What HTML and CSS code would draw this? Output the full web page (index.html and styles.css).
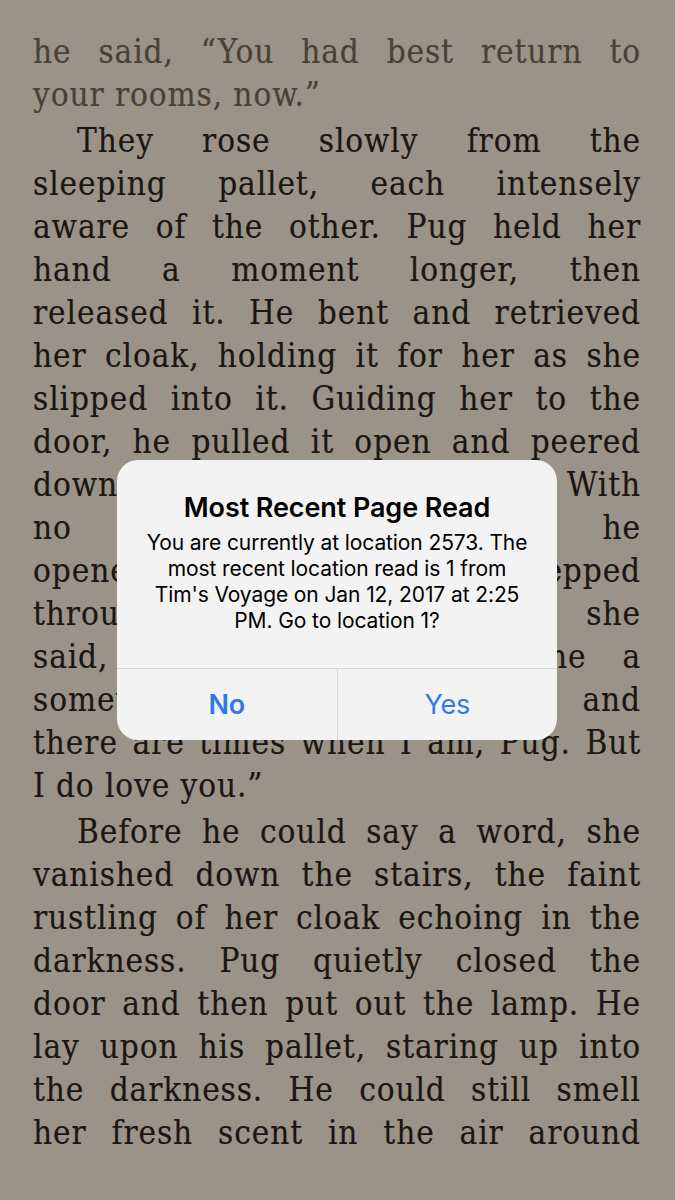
FILE: index.html
```html
<!DOCTYPE html>
<html>
<head>
<meta charset="utf-8">
<link rel="stylesheet" href="styles.css">
</head>
<body>
<div class="page">
  <div class="para faded">
    <div class="ln">he said, “You had best return to</div>
    <div class="ln last">your rooms, now.”</div>
  </div>
  <div class="para">
    <div class="ln indent">They rose slowly from the</div>
    <div class="ln">sleeping pallet, each intensely</div>
    <div class="ln">aware of the other. Pug held her</div>
    <div class="ln">hand a moment longer, then</div>
    <div class="ln">released it. He bent and retrieved</div>
    <div class="ln">her cloak, holding it for her as she</div>
    <div class="ln">slipped into it. Guiding her to the</div>
    <div class="ln">door, he pulled it open and peered</div>
    <div class="ln">down the stairs below. With</div>
    <div class="ln">no hint of anyone about, he</div>
    <div class="ln">opened the door and she stepped</div>
    <div class="ln">through. Turning, she</div>
    <div class="ln">said, “I know you think me a</div>
    <div class="ln">somewhat spoiled girl, and</div>
    <div class="ln">there are times when I am, Pug. But</div>
    <div class="ln last">I do love you.”</div>
  </div>
  <div class="para">
    <div class="ln indent">Before he could say a word, she</div>
    <div class="ln">vanished down the stairs, the faint</div>
    <div class="ln">rustling of her cloak echoing in the</div>
    <div class="ln">darkness. Pug quietly closed the</div>
    <div class="ln">door and then put out the lamp. He</div>
    <div class="ln">lay upon his pallet, staring up into</div>
    <div class="ln">the darkness. He could still smell</div>
    <div class="ln">her fresh scent in the air around</div>
  </div>
</div>

<div class="alert">
  <div class="alert-body">
    <div class="alert-title">Most Recent Page Read</div>
    <div class="alert-msg">You are currently at location 2573. The<br>most recent location read is 1 from<br>Tim's Voyage on Jan 12, 2017 at 2:25<br>PM. Go to location 1?</div>
  </div>
  <div class="alert-actions">
    <div class="alert-btn primary">No</div>
    <div class="alert-btn">Yes</div>
  </div>
</div>
</body>
</html>
```
FILE: styles.css
```css
html, body {
  margin: 0;
  padding: 0;
}
body {
  background: #9a9488;
  width: 675px;
  height: 1200px;
  overflow: hidden;
  position: relative;
}
.page {
  padding: 30px 34px 0 33px;
  font-family: "DejaVu Serif Condensed", "DejaVu Serif", serif;
  font-stretch: condensed;
  font-size: 33px;
  line-height: 43px;
  letter-spacing: 0.9px;
  color: #1a1611;
  -webkit-text-stroke: 0.2px currentColor;
}
.para + .para {
  margin-top: 3px;
}
.faded {
  color: #4a4034;
}
.ln {
  white-space: nowrap;
  text-align: justify;
  text-align-last: justify;
}
.ln.last {
  text-align-last: left;
}
.ln.indent {
  padding-left: 44px;
}
.alert {
  position: absolute;
  top: 460px;
  left: 117px;
  width: 440px;
  background: #f3f3f3;
  border-radius: 21px;
  overflow: hidden;
  font-family: "Inter", "Noto Sans", sans-serif;
  color: #000;
}
.alert-body {
  padding: 31px 12px 34px;
  text-align: center;
}
.alert-title {
  font-size: 27px;
  font-weight: 600;
  line-height: 34px;
  letter-spacing: -0.1px;
}
.alert-msg {
  margin-top: 5px;
  font-size: 21px;
  line-height: 26px;
  letter-spacing: -0.1px;
}
.alert-actions {
  display: flex;
  border-top: 1px solid #d6d6d6;
  height: 71px;
}
.alert-btn {
  flex: 1;
  display: flex;
  align-items: center;
  justify-content: center;
  font-size: 27px;
  color: #2f7ae5;
  letter-spacing: -0.2px;
}
.alert-btn + .alert-btn {
  border-left: 1px solid #d6d6d6;
}
.alert-btn.primary {
  font-weight: 600;
}
```
